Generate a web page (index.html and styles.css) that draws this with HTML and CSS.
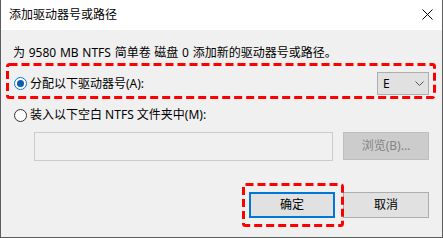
FILE: index.html
```html
<!DOCTYPE html>
<html lang="zh-CN">
<head>
<meta charset="utf-8">
<link rel="stylesheet" href="styles.css">
</head>
<body>
<div class="window">
  <div class="titlebar">
    <span class="title">添加驱动器号或路径</span>
    <svg class="close" width="11" height="11" viewBox="0 0 11 11"><path d="M0.5 0.5 L10.5 10.5 M10.5 0.5 L0.5 10.5" stroke="#000" stroke-width="1" fill="none"/></svg>
  </div>
  <div class="content">
    <p class="desc">为 9580 MB NTFS 简单卷 磁盘 0 添加新的驱动器号或路径。</p>
    <div class="row row-assign">
      <div class="radio-label"><span class="radio checked"></span><span>分配以下驱动器号(A):</span></div>
      <div class="select"><span class="select-value">E</span><svg class="chev" width="9" height="5" viewBox="0 0 9 5"><path d="M0.5 0.5 L4.5 4.5 L8.5 0.5" stroke="#555" stroke-width="1" fill="none"/></svg></div>
    </div>
    <div class="row row-mount">
      <div class="radio-label"><span class="radio"></span><span>装入以下空白 NTFS 文件夹中(M):</span></div>
    </div>
    <div class="row row-path">
      <div class="path-input"></div>
      <div class="btn btn-disabled">浏览(B)...</div>
    </div>
    <div class="row row-actions">
      <div class="btn btn-primary">确定</div>
      <div class="btn">取消</div>
    </div>
  </div>
  <svg class="mark mark-1" width="430" height="36" viewBox="0 0 430 36"><rect x="1.5" y="1.5" width="427" height="33" rx="2" fill="none" stroke="#ff0000" stroke-width="3" stroke-dasharray="8 4"/></svg>
  <svg class="mark mark-2" width="102" height="44" viewBox="0 0 102 44"><rect x="1.5" y="1.5" width="99" height="41" rx="2" fill="none" stroke="#ff0000" stroke-width="3" stroke-dasharray="8 4"/></svg>
</div>
</body>
</html>
```

FILE: styles.css
```css
* { box-sizing: border-box; }
html, body { margin: 0; padding: 0; }
body {
  width: 443px;
  height: 238px;
  overflow: hidden;
  font-family: "Noto Sans", "Noto Sans CJK SC", sans-serif;
  font-size: 12px;
  color: #000;
  background: #f0f0f0;
}
.window {
  position: relative;
  width: 443px;
  height: 238px;
  background: #f0f0f0;
  border-left: 1px solid #5c5c5c;
  border-right: 1px solid #5c5c5c;
  border-bottom: 1px solid #5c5c5c;
  display: flex;
  flex-direction: column;
}
.titlebar {
  height: 30px;
  background: #ffffff;
  display: flex;
  align-items: center;
  justify-content: space-between;
  padding: 0 9px 1px 8px;
  flex: none;
}
.title { line-height: 16px; }
.close { display: block; margin-right: 0; }
.content {
  padding: 15px 13px 0 12px;
  display: flex;
  flex-direction: column;
}
.desc {
  margin: 0;
  line-height: 16px;
  height: 16px;
  white-space: nowrap;
  word-spacing: 0.6px;
}
.row { display: flex; align-items: center; }
.row-assign {
  margin-top: 11px;
  height: 23px;
  justify-content: space-between;
}
.row-mount {
  margin-top: 12px;
  height: 16px;
}
.radio-label {
  display: flex;
  align-items: center;
  gap: 3px;
  line-height: 16px;
  white-space: nowrap;
}
.radio {
  width: 13px;
  height: 13px;
  margin-left: 1px;
  border-radius: 50%;
  border: 1px solid #333;
  background: #fff;
  position: relative;
  flex: none;
}
.radio.checked { border-color: #0078d7; }
.radio.checked::after {
  content: "";
  position: absolute;
  left: 2px; top: 2px;
  width: 7px; height: 7px;
  border-radius: 50%;
  background: #0b5cad;
}
.select {
  width: 52px;
  height: 23px;
  background: #e1e1e1;
  border: 1px solid #adadad;
  display: flex;
  align-items: center;
  justify-content: space-between;
  padding: 0 4px 0 5px;
}
.select-value { line-height: 16px; }
.chev { display: block; }
.row-path {
  margin-top: 9px;
  padding-left: 21px;
  gap: 10px;
  align-items: flex-start;
}
.path-input {
  width: 299px;
  height: 29px;
  border: 1px solid #cccccc;
  background: #f0f0f0;
}
.btn {
  width: 86px;
  height: 26px;
  border: 1px solid #adadad;
  background: #e1e1e1;
  display: flex;
  align-items: center;
  justify-content: center;
  line-height: 16px;
}
.btn-disabled {
  height: 28px;
  background: #cccccc;
  border-color: #bfbfbf;
  color: #838383;
}
.btn-primary {
  border: 2px solid #0078d7;
}
.row-actions {
  margin-top: 31px;
  justify-content: flex-end;
  gap: 8px;
}
.mark { position: absolute; display: block; }
.mark-1 { left: 5px; top: 63px; }
.mark-2 { left: 241px; top: 183px; }
```
